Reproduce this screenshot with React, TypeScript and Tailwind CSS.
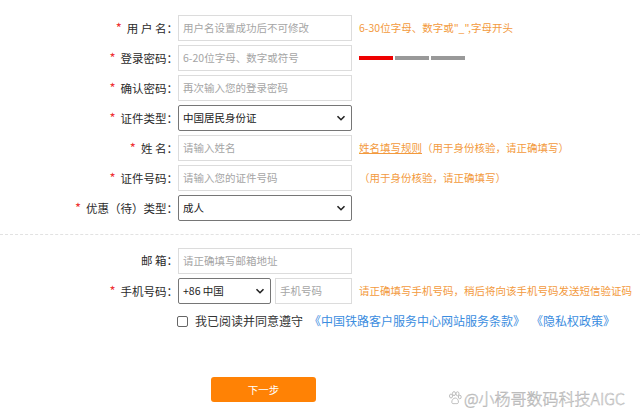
import React from 'react';

const font = { fontFamily: '"Noto Sans CJK SC", "Liberation Sans", sans-serif' };

function Label({ text, required = true }: { text: string; required?: boolean }) {
  return (
    <div className="w-[178px] shrink-0 text-right text-[11.5px] text-[#2a2a2a] whitespace-pre">
      {required && <span className="text-[#e33] text-[13px] mr-[5px]">*</span>}
      {text}
    </div>
  );
}

function Chevron() {
  return (
    <svg width="10" height="10" viewBox="0 0 10 10" className="absolute right-[5px] top-1/2 -translate-y-1/2">
      <path d="M1.5 3.2 L5 6.7 L8.5 3.2" fill="none" stroke="#222" strokeWidth="1.6" />
    </svg>
  );
}

function TextBox({ placeholder, className = 'w-[174px]' }: { placeholder: string; className?: string }) {
  return (
    <div className={`${className} h-[26px] border border-[#dcdcdc] flex items-center px-[4px] text-[10.5px] text-[#a5a5a5]`}>
      {placeholder}
    </div>
  );
}

function Select({ value, className = 'w-[174px]' }: { value: string; className?: string }) {
  return (
    <div className={`${className} relative h-[26px] border border-[#767676] rounded-[2px] flex items-center px-[4px] text-[10.5px] text-[#222]`}>
      {value}
      <Chevron />
    </div>
  );
}

function Row({ children }: { children: React.ReactNode }) {
  return <div className="flex items-center h-[26px] mb-[4px]">{children}</div>;
}

function Hint({ children }: { children: React.ReactNode }) {
  return <div className="ml-[7px] text-[10.5px] text-[#f39a3d] whitespace-nowrap">{children}</div>;
}

export default function App() {
  return (
    <div className="relative w-[640px] h-[420px] bg-white overflow-hidden" style={font}>
      <div className="pt-[15px]">
        <Row>
          <Label text={'用 户 名：'} />
          <TextBox placeholder="用户名设置成功后不可修改" />
          <Hint>6-30位字母、数字或"_",字母开头</Hint>
        </Row>
        <Row>
          <Label text="登录密码：" />
          <TextBox placeholder="6-20位字母、数字或符号" />
          <div className="ml-[7px] flex gap-[2px]">
            <div className="w-[34px] h-[4px] bg-[#ee0000]" />
            <div className="w-[34px] h-[4px] bg-[#999]" />
            <div className="w-[34px] h-[4px] bg-[#999]" />
          </div>
        </Row>
        <Row>
          <Label text="确认密码：" />
          <TextBox placeholder="再次输入您的登录密码" />
        </Row>
        <Row>
          <Label text="证件类型：" />
          <Select value="中国居民身份证" />
        </Row>
        <Row>
          <Label text={'姓 名：'} />
          <TextBox placeholder="请输入姓名" />
          <Hint>
            <span className="underline">姓名填写规则</span>（用于身份核验，请正确填写）
          </Hint>
        </Row>
        <Row>
          <Label text="证件号码：" />
          <TextBox placeholder="请输入您的证件号码" />
          <Hint>（用于身份核验，请正确填写）</Hint>
        </Row>
        <Row>
          <Label text="优惠（待）类型：" />
          <Select value="成人" />
        </Row>

        <div className="mt-[13px] mb-[13px] border-t border-dashed border-[#e2e2e2]" />

        <Row>
          <Label text={'邮 箱：'} required={false} />
          <TextBox placeholder="请正确填写邮箱地址" />
        </Row>
        <Row>
          <Label text="手机号码：" />
          <div className="flex gap-[4px]">
            <Select value="+86 中国" className="w-[93px]" />
            <TextBox placeholder="手机号码" className="w-[77px]" />
          </div>
          <Hint>请正确填写手机号码，稍后将向该手机号码发送短信验证码</Hint>
        </Row>

        <div className="flex items-center mt-[8px] pl-[177px] text-[12px]">
          <span className="w-[11px] h-[11px] border border-[#666] rounded-[2px]" />
          <span className="ml-[7px] text-[#333]">我已阅读并同意遵守</span>
          <span className="ml-[6px] text-[#3b8de0]">《中国铁路客户服务中心网站服务条款》</span>
          <span className="ml-[6px] text-[#3b8de0]">《隐私权政策》</span>
        </div>

        <div className="mt-[45px] pl-[211px]">
          <button className="w-[105px] h-[25px] rounded-[3px] bg-[#ff8205] text-white text-[10.5px]">下一步</button>
        </div>
      </div>

      <div className="absolute left-[448px] top-[386px] flex items-center gap-[2px] text-[16px] font-light text-white [-webkit-text-stroke:0.5px_#b0b0b0]">
        <svg width="14" height="14" viewBox="0 0 14 14" fill="none" stroke="#b5b5b5" strokeWidth="0.9">
          <ellipse cx="3" cy="5" rx="1.5" ry="2" />
          <ellipse cx="6" cy="2.6" rx="1.5" ry="2" />
          <ellipse cx="9.5" cy="2.8" rx="1.5" ry="2" />
          <ellipse cx="11.8" cy="6" rx="1.4" ry="1.8" />
          <path d="M3.8 11.5 C3.5 9 5.5 7 7.2 7 C9 7 10.8 9 10.4 11.5 C10 13 8.5 12.6 7.2 12.6 C5.8 12.6 4.1 13 3.8 11.5 Z" />
        </svg>
        <span>@小杨哥数码科技AIGC</span>
      </div>
    </div>
  );
}
